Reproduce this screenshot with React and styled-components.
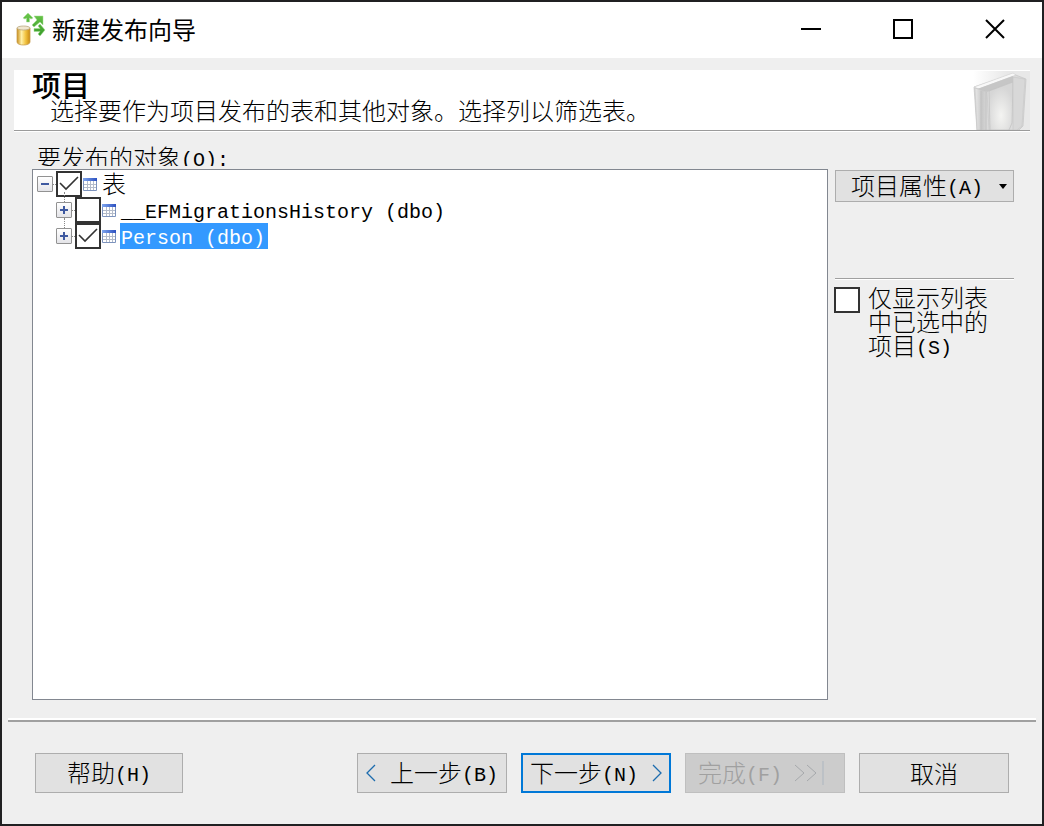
import React, { useState } from 'react';
import styled, { createGlobalStyle, css } from 'styled-components';

const GlobalStyle = createGlobalStyle`
  *, *::before, *::after { box-sizing: border-box; }
  body { margin: 0; background: #202022; }
  button, input { font: inherit; color: inherit; margin: 0; }
`;

const Window = styled.div`
  display: flex;
  flex-direction: column;
  min-height: 100vh;
  border: 2px solid #202022;
  background: #efefef;
  color: #000;
  font: 300 24px/24px "Noto Sans CJK SC", sans-serif;
`;

const TitleBar = styled.header`
  display: flex;
  align-items: center;
  height: 56px;
  padding: 0 1px 2px 14px;
  background: #fff;
`;

const WindowTitle = styled.h1`
  flex: 1;
  margin: 0 0 0 4px;
  font-size: 24px;
  line-height: 32px;
  font-weight: 400;
`;

const CaptionButton = styled.button`
  display: grid;
  place-items: center;
  width: 92px;
  height: 54px;
  padding: 0;
  border: 0;
  background: none;
`;

const Banner = styled.section`
  display: flex;
  justify-content: space-between;
  align-items: flex-end;
  height: 61px;
  margin: 12px 12px 0;
  border-bottom: 1px solid #9b9b9b;
  background: #fff;
  box-shadow: 0 1px #fff;
`;

const BannerText = styled.div`
  align-self: flex-start;
  padding-left: 18px;
`;

const BannerTitle = styled.h2`
  margin: 0;
  font-size: 29px;
  line-height: 28px;
  font-weight: 500;
`;

const BannerHint = styled.p`
  margin: 0 0 0 18px;
`;

const Latin = styled.span`
  font-family: "Liberation Mono", monospace;
  font-size: 20px;
  line-height: 20px;
  vertical-align: 1px;
  white-space: pre;
`;

const Content = styled.main`
  flex: 1;
  display: flex;
  gap: 7px;
  padding: 14px 28px 20px 30px;
`;

const ObjectsPanel = styled.section`
  flex: 1;
  display: flex;
  flex-direction: column;
`;

const Label = styled.div`
  height: 21px;
  margin-bottom: 3px;
  padding-left: 5px;
  overflow: hidden;
`;

const Tree = styled.ul`
  flex: 1;
  margin: 0;
  padding: 1px 0 0 4px;
  border: 1px solid #828790;
  background: #fff;
  list-style: none;
`;

const SubTree = styled.ul`
  margin: 0;
  padding: 0 0 0 19px;
  list-style: none;
`;

const Row = styled.div`
  display: flex;
  align-items: center;
  height: 26px;
`;

const Expander = styled.button`
  position: relative;
  display: grid;
  place-items: center;
  width: 16px;
  height: 16px;
  padding: 0;
  border: 1px solid #929292;
  border-radius: 1px;
  background: linear-gradient(#fff, #e4e4e8);

  ${({ $child }) => $child && css`
    &::before {
      content: "";
      position: absolute;
      left: 7px;
      bottom: 15px;
      height: 10px;
      border-left: 1px dotted #888;
    }
  `}
`;

const Connector = styled.span`
  width: 3px;
  border-top: 1px dotted #888;
`;

const Tick = styled.input`
  appearance: none;
  flex: none;
  width: 26px;
  height: 26px;
  border: 2px solid #333;
  background: #fff;

  &:checked {
    background: #fff url("data:image/svg+xml,%3Csvg xmlns='http://www.w3.org/2000/svg' viewBox='0 0 22 22'%3E%3Cpath d='M2 10l6 6L20 4' fill='none' stroke='%23333' stroke-width='1.6'/%3E%3C/svg%3E");
  }
`;

const NodeLabel = styled.label`
  height: 26px;
  margin-left: 4px;
  padding: 0 3px 0 1px;
  background: ${({ $selected }) => ($selected ? '#3399ff' : 'transparent')};
  color: ${({ $selected }) => ($selected ? '#fff' : '#000')};
`;

const Side = styled.aside`
  width: 179px;
  padding-top: 25px;
`;

const buttonFace = css`
  border: 1px solid #adadad;
  background: #e1e1e1;
  white-space: nowrap;
`;

const MenuButton = styled.button`
  ${buttonFace}
  display: flex;
  align-items: center;
  justify-content: space-between;
  width: 100%;
  height: 32px;
  padding: 0 6px 0 15px;
`;

const Separator = styled.hr`
  height: 2px;
  margin: 76px 0 5px;
  border: 0;
  border-top: 1px solid #a0a0a0;
  background: #fff;
`;

const FilterOption = styled.label`
  display: flex;
  align-items: flex-start;
  gap: 8px;
  margin-left: -1px;

  ${Tick} { margin-top: 2px; }
`;

const FilterText = styled.span`
  width: 122px;
`;

const Footer = styled.footer`
  display: flex;
  gap: 14px;
  margin: 0 6px;
  padding: 31px 27px 31px;
  border-top: 2px solid #a0a0a0;
  box-shadow: 0 -2px #fff;
`;

const WizardButton = styled.button`
  ${buttonFace}
  display: flex;
  align-items: center;
  justify-content: center;
  gap: ${({ $gap }) => $gap || 0}px;
  width: ${({ $wide }) => ($wide ? 160 : 150)}px;
  height: 40px;
  padding: 0;

  &:first-child { width: 148px; margin-right: auto; }

  ${({ $primary }) => $primary && css`
    border: 2px solid #0078d7;
  `}

  &:disabled {
    justify-content: flex-start;
    padding-left: 12px;
    border-color: #bfbfbf;
    background: #ccc;
    color: #a0a0a0;
  }
`;

function ReplicationIcon() {
  return (
    <svg width="32" height="34" viewBox="0 0 32 34" aria-hidden="true">
      <defs>
        <linearGradient id="gold">
          <stop offset="0" stopColor="#c98f1c" />
          <stop offset=".35" stopColor="#fff0a8" />
          <stop offset=".65" stopColor="#f3c544" />
          <stop offset="1" stopColor="#c98a10" />
        </linearGradient>
        <linearGradient id="leaf" x2="0" y2="1">
          <stop offset="0" stopColor="#6cc84c" />
          <stop offset="1" stopColor="#379a28" />
        </linearGradient>
      </defs>
      <path d="M1 16v14c0 4 13 4 13 0V16z" fill="url(#gold)" stroke="#c9a050" strokeWidth=".8" />
      <ellipse cx="7.500" cy="16" rx="6.500" ry="2" fill="#f0e6d0" stroke="#b9a880" strokeWidth=".8" />
      <path d="M12 1l5 5-2 1-1.500-1v4h-3V6L9 7 7 6zM18 4h9v9l-3-3-6 5-2-2 5-5zM24 12l5 6-5 6-2-2 2-2.500h-6v-3h6L22 14z" fill="url(#leaf)" stroke="#a5dc92" strokeWidth=".5" />
    </svg>
  );
}

function BookIcon() {
  return (
    <svg width="57" height="59" viewBox="0 0 57 59" aria-hidden="true">
      <defs>
        <linearGradient id="fade">
          <stop offset="0" stopColor="#fff" />
          <stop offset=".6" stopColor="#e8e8e8" />
        </linearGradient>
        <radialGradient id="glow" cx=".5" cy=".7" r=".6">
          <stop offset="0" stopColor="#f4f4f2" />
          <stop offset="1" stopColor="#d6d6d6" />
        </radialGradient>
        <linearGradient id="spine">
          <stop offset="0" stopColor="#e8e8e8" />
          <stop offset=".5" stopColor="#c8c8c8" />
          <stop offset="1" stopColor="#dedede" />
        </linearGradient>
      </defs>
      <path d="M0 0h57v59H0z" fill="url(#fade)" />
      <path d="M1 16L40 3l13 5-3 47-4 4H4z" fill="#dcdcdc" stroke="#c4c4c4" strokeWidth=".7" />
      <path d="M1 16L40 2l3 2L6 18z" fill="#f8f8f8" stroke="#d0d0d0" strokeWidth=".6" />
      <path d="M4 18L40 5v6L14 21z" fill="#c6c6c6" />
      <path d="M2 17l12 4 2 38H4z" fill="url(#spine)" stroke="#c4c4c4" strokeWidth=".6" />
      <path d="M16 20l24-9-1 41-3 7H17z" fill="url(#glow)" stroke="#c0c0c0" strokeWidth=".7" />
      <path d="M40 6l12 2-3 47-5 4h-4z" fill="#d8d8d8" stroke="#c6c6c6" strokeWidth=".6" />
      <path d="M8 20v39M13 21v38" stroke="#b8b8b8" strokeWidth=".6" />
    </svg>
  );
}

const TableSvg = styled.svg`
  flex: none;
  margin-left: 1px;
`;

function TableIcon() {
  return (
    <TableSvg width="14" height="13" viewBox="0 0 14 13" aria-hidden="true">
      <defs>
        <linearGradient id="head">
          <stop offset="0" stopColor="#7fa6ee" />
          <stop offset="1" stopColor="#2c50c0" />
        </linearGradient>
      </defs>
      <path d="M.5.5h13v12H.5z" fill="#fff" stroke="#7d93bd" />
      <path d="M0 0h14v3H0z" fill="url(#head)" />
      <path d="M4.500 3v9M7.500 3v9M10.500 3v9M1 6.500h12M1 9.500h12" stroke="#b4bccb" />
    </TableSvg>
  );
}

function Chevron({ d, color = '#1c6cae' }) {
  return (
    <svg width="10" height="20" viewBox="0 0 10 20" fill="none" aria-hidden="true">
      <path d={d} stroke={color} strokeWidth="1.300" />
    </svg>
  );
}

function TreeNode({ id, text, open, child, checked, selected, onToggle }) {
  return (
    <Row>
      <Expander $child={child} type="button" aria-label={open ? '折叠' : '展开'}>
        <svg width="10" height="10" viewBox="0 0 10 10" aria-hidden="true">
          <path d={open ? 'M1 5h8' : 'M1 5h8M5 1v8'} stroke="#3e59a0" strokeWidth="2" />
        </svg>
      </Expander>
      <Connector />
      <Tick id={id} type="checkbox" checked={checked} onChange={onToggle} />
      <TableIcon />
      <NodeLabel htmlFor={id} $selected={selected}>{text}</NodeLabel>
    </Row>
  );
}

export default function App() {
  const [checks, setChecks] = useState({ tables: true, history: false, person: true });
  const toggle = (key) => () => setChecks((c) => ({ ...c, [key]: !c[key] }));

  return (
    <Window>
      <GlobalStyle />
      <TitleBar>
        <ReplicationIcon />
        <WindowTitle>新建发布向导</WindowTitle>
        <CaptionButton type="button" aria-label="最小化">
          <svg width="20" height="20"><path d="M0 10h20" stroke="#000" strokeWidth="2" /></svg>
        </CaptionButton>
        <CaptionButton type="button" aria-label="最大化">
          <svg width="20" height="20"><path d="M1 1h18v18H1z" fill="none" stroke="#000" strokeWidth="2" /></svg>
        </CaptionButton>
        <CaptionButton type="button" aria-label="关闭">
          <svg width="20" height="20"><path d="M1 1l18 18M19 1L1 19" stroke="#000" strokeWidth="2" /></svg>
        </CaptionButton>
      </TitleBar>

      <Banner>
        <BannerText>
          <BannerTitle>项目</BannerTitle>
          <BannerHint>选择要作为项目发布的表和其他对象。选择列以筛选表。</BannerHint>
        </BannerText>
        <BookIcon />
      </Banner>

      <Content>
        <ObjectsPanel>
          <Label>要发布的对象<Latin>(O):</Latin></Label>
          <Tree>
            <li>
              <TreeNode id="tables" text="表" open checked={checks.tables} onToggle={toggle('tables')} />
              <SubTree>
                <li>
                  <TreeNode id="history" child text={<Latin>__EFMigrationsHistory (dbo)</Latin>} checked={checks.history} onToggle={toggle('history')} />
                </li>
                <li>
                  <TreeNode id="person" child selected text={<Latin>Person (dbo)</Latin>} checked={checks.person} onToggle={toggle('person')} />
                </li>
              </SubTree>
            </li>
          </Tree>
        </ObjectsPanel>

        <Side>
          <MenuButton type="button">
            <span>项目属性<Latin>(A)</Latin></span>
            <svg width="8" height="5" aria-hidden="true"><path d="M0 0h8L4 5z" /></svg>
          </MenuButton>
          <Separator />
          <FilterOption>
            <Tick type="checkbox" />
            <FilterText>仅显示列表中已选中的项目<Latin>(S)</Latin></FilterText>
          </FilterOption>
        </Side>
      </Content>

      <Footer>
        <WizardButton type="button"><span>帮助<Latin>(H)</Latin></span></WizardButton>
        <WizardButton type="button" $gap={14}>
          <Chevron d="M9 2L1 10l8 8" />
          <span>上一步<Latin>(B)</Latin></span>
        </WizardButton>
        <WizardButton type="button" $primary $gap={14}>
          <span>下一步<Latin>(N)</Latin></span>
          <Chevron d="M1 2l8 8-8 8" />
        </WizardButton>
        <WizardButton type="button" disabled $wide $gap={12}>
          <span>完成<Latin>(F)</Latin></span>
          <svg width="32" height="24" viewBox="0 0 32 24" fill="none" aria-hidden="true">
            <path d="M1 4l9 8-9 8M13 4l9 8-9 8" stroke="#a6a9ac" />
            <path d="M29 0v24" stroke="#bcc1c6" strokeWidth="2" />
          </svg>
        </WizardButton>
        <WizardButton type="button">取消</WizardButton>
      </Footer>
    </Window>
  );
}
